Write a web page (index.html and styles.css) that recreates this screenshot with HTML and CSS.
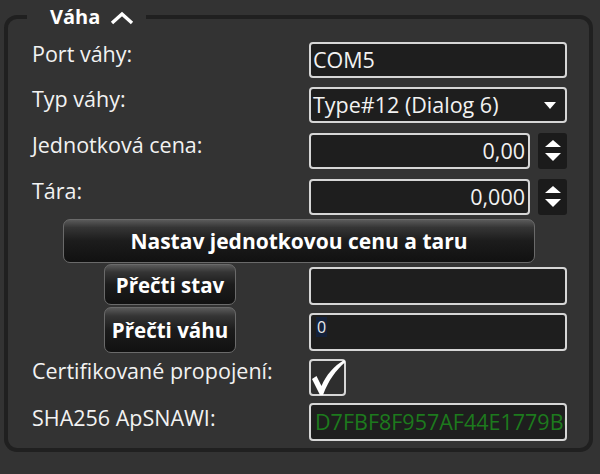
FILE: index.html
```html
<!DOCTYPE html>
<html lang="cs">
<head>
<meta charset="utf-8">
<link rel="stylesheet" href="styles.css">
</head>
<body>
<div class="group">
  <div class="legend">
    <span class="legend-title">Váha</span>
    <svg class="chevron" width="24" height="14" viewBox="0 0 24 14"><polyline points="2,12 12,3 22,12" fill="none" stroke="#fff" stroke-width="3.4"/></svg>
  </div>
  <div class="form">
    <div class="label">Port váhy:</div>
    <div class="field"><span class="val">COM5</span></div>

    <div class="label">Typ váhy:</div>
    <div class="field combo"><span class="val">Type#12 (Dialog 6)</span>
      <svg class="caret" width="12" height="7" viewBox="0 0 12 7"><polygon points="0,0 12,0 6,7" fill="#fff"/></svg>
    </div>

    <div class="label">Jednotková cena:</div>
    <div class="numeric">
      <div class="field num"><span class="val">0,00</span></div>
      <div class="spin"><svg width="16" height="22" viewBox="0 0 16 22"><polygon points="8,0 16,7 0,7" fill="#fff"/><polygon points="0,13 16,13 8,21" fill="#fff"/></svg></div>
    </div>

    <div class="label">Tára:</div>
    <div class="numeric">
      <div class="field num"><span class="val">0,000</span></div>
      <div class="spin"><svg width="16" height="22" viewBox="0 0 16 22"><polygon points="8,0 16,7 0,7" fill="#fff"/><polygon points="0,13 16,13 8,21" fill="#fff"/></svg></div>
    </div>

    <button class="btn btn-wide">Nastav jednotkovou cenu a taru</button>

    <button class="btn btn-small btn-stav">Přečti stav</button>
    <div class="field field-stav"></div>

    <button class="btn btn-small btn-vaha">Přečti váhu</button>
    <div class="field field-vaha"><span class="zero">0</span></div>

    <div class="label">Certifikované propojení:</div>
    <div class="check">
      <svg class="tick" width="40" height="40" viewBox="0 0 40 40"><path d="M3,20 L7.5,17 L12.5,27 C17,16 25,7 35,1 L36.5,3 C27,11 19.5,21 14,36 L11,36 Z" fill="#fff"/></svg>
    </div>

    <div class="label label-sha">SHA256 ApSNAWI:</div>
    <div class="field sha"><span class="val">D7FBF8F957AF44E1779B0C</span></div>
  </div>
</div>
</body>
</html>
```

FILE: styles.css
```css
html, body {
  margin: 0;
  padding: 0;
}
body {
  width: 600px;
  height: 474px;
  overflow: hidden;
  background: #333333;
  font-family: "Open Sans", "Noto Sans", sans-serif;
  color: #f2f2f2;
}
.group {
  position: relative;
  margin: 15px 0 0 4px;
  width: 589px;
  height: 437px;
  box-sizing: border-box;
  border: 4px solid #202020;
  border-radius: 13px;
  padding: 23px 22px 0 24px;
}
.legend {
  position: absolute;
  top: -15px;
  left: 19px;
  height: 26px;
  padding: 0 12px 0 23px;
  background: #333333;
  display: flex;
  align-items: center;
  gap: 10px;
}
.legend-title {
  font-weight: 700;
  font-size: 20px;
  line-height: 26px;
  color: #fff;
}
.chevron {
  display: block;
  margin-top: 1px;
}
.form {
  display: grid;
  grid-template-columns: 277px 258px;
  grid-template-rows: 45px 46px 46px 40px 45px 43px 52px 44px 38px;
  align-items: start;
}
.label {
  font-size: 21.5px;
  line-height: 24px;
  white-space: nowrap;
}
.label-sha {
  padding-top: 3px;
}
.field {
  box-sizing: border-box;
  height: 36px;
  border: 2px solid #d6d6d6;
  border-radius: 4px;
  background: #1e1e1e;
  display: flex;
  align-items: center;
  padding: 0 2px;
  overflow: hidden;
  white-space: nowrap;
  font-size: 21.5px;
  line-height: 24px;
}
.combo {
  justify-content: space-between;
  padding-right: 9px;
}
.caret {
  display: block;
  flex-shrink: 0;
}
.numeric {
  display: flex;
  gap: 8px;
  height: 36px;
}
.num {
  width: 221px;
  justify-content: flex-end;
  padding-right: 3px;
}
.spin {
  width: 29px;
  height: 36px;
  background: #1b1b1b;
  border-radius: 3px;
  display: flex;
  align-items: center;
  justify-content: center;
}
.spin svg {
  display: block;
}
.btn {
  box-sizing: border-box;
  font-family: "Open Sans", "Noto Sans", sans-serif;
  font-weight: 700;
  color: #fff;
  border: 1px solid #6a6a6a;
  border-radius: 7px;
  background: linear-gradient(#5a5a5a 0, #353535 18%, #1c1c1c 50%, #111111 100%);
  padding: 0;
  cursor: pointer;
}
.btn-wide {
  grid-column: 1 / 3;
  margin-left: 31px;
  width: 472px;
  height: 44px;
  font-size: 21px;
}
.btn-small {
  margin-left: 72px;
  width: 132px;
  font-size: 20.5px;
}
.btn-stav {
  height: 41px;
}
.btn-vaha {
  height: 46px;
}
.field-stav {
  margin-top: 3px;
  height: 38px;
}
.field-vaha {
  margin-top: 6px;
  height: 38px;
  align-items: flex-start;
  padding: 2px 5px;
}
.zero {
  font-size: 16px;
  line-height: 20px;
  color: #e8e8e8;
  background: #14213a;
  padding: 0 1px;
}
.check {
  position: relative;
  box-sizing: border-box;
  width: 37px;
  height: 37px;
  border: 2px solid #d6d6d6;
  border-radius: 4px;
  background: #2e2e2e;
}
.tick {
  position: absolute;
  left: -2px;
  top: -2px;
}
.sha {
  height: 38px;
  padding-left: 4px;
}
.sha .val {
  color: #1d7a1d;
}
```
